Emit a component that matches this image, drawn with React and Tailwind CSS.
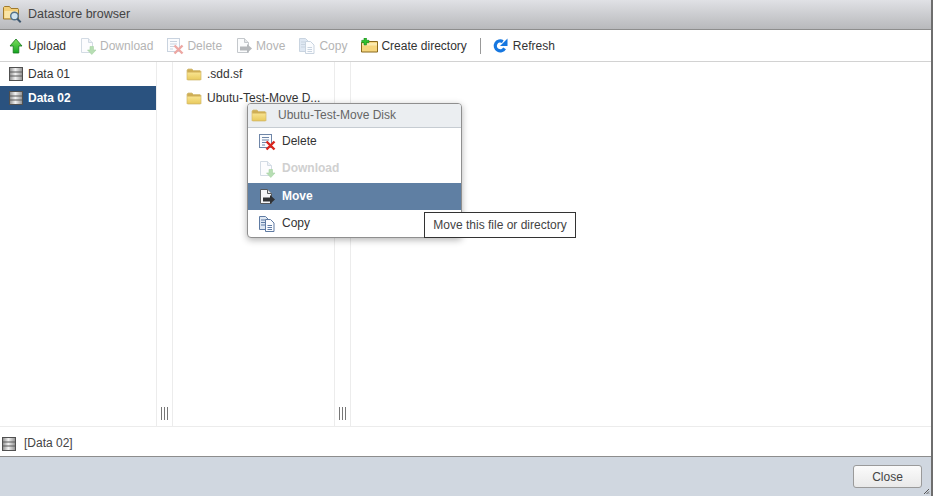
import { useId } from 'react'

function FolderIcon({ className = '' }) {
  const id = useId()
  return (
    <svg width="16" height="13" viewBox="0 0 16 13" className={className}>
      <defs>
        <linearGradient id={id} x1="0" x2="0" y1="0" y2="1">
          <stop offset="0" stopColor="#f8e38f" />
          <stop offset="1" stopColor="#e9cb5f" />
        </linearGradient>
      </defs>
      <path d="M1 11.500V2l1-1h4l1.500 1.500H14l1 1v8l-.5.500h-13z" fill="#cfae55" stroke="#d6c07e" strokeWidth="0.800" />
      <path d="M1.300 4.500h13.400V11.500H1.300z" fill={`url(#${id})`} />
    </svg>
  )
}

function DiskIcon({ size = 16 }) {
  const id = useId()
  return (
    <svg width={size} height={size} viewBox="0 0 14 14">
      <defs>
        <linearGradient id={id} x1="0" x2="1" y1="0" y2="0">
          <stop offset="0" stopColor="#8c8c8c" />
          <stop offset="0.45" stopColor="#f2f2f2" />
          <stop offset="1" stopColor="#8f8f8f" />
        </linearGradient>
      </defs>
      <rect x="0.500" y="0.500" width="13" height="13" fill={`url(#${id})`} stroke="#505050" />
      <path d="M1 5h12M1 9h12" stroke="#5a5a5a" strokeWidth="1" />
    </svg>
  )
}

function PageBase({ faded, children }) {
  const s = faded ? '#c5d0dc' : '#6d83a3'
  return (
    <svg width="18" height="18" viewBox="0 0 18 18" opacity={faded ? 0.75 : 1}>
      <path d="M2.500 1.500h7l4 4v10h-11z" fill="#fbfcfe" stroke={s} />
      <path d="M9.500 1.500v4h4" fill="#e6ecf3" stroke={s} />
      {children}
    </svg>
  )
}

function DownloadIcon({ faded }) {
  return (
    <PageBase faded={faded}>
      <path d="M11 9.500h3.500v3.500H17l-4.200 4.500L8.500 13H11z" fill="#9fd39a" stroke="#8cc488" strokeWidth="0.600" />
    </PageBase>
  )
}

function DeleteIcon({ faded }) {
  const line = faded ? '#c9d3df' : '#6f86a8'
  const x = faded ? '#eda7a3' : '#d9251c'
  return (
    <svg width="18" height="18" viewBox="0 0 18 18">
      <rect x="1.500" y="1.500" width="12" height="13" fill="#fbfcfe" stroke={line} />
      <path d="M4 4.500h7M4 7h7M4 9.500h4M4 12h3" stroke={line} />
      <path d="M8.500 8.500l8 8M16.500 8.500l-8 8" stroke={x} strokeWidth="2.400" />
    </svg>
  )
}

function MoveIcon({ faded, active }) {
  const s = faded ? '#c4c8cc' : '#55585c'
  const arrow = faded ? '#b5b8bb' : '#2f3134'
  return (
    <svg width="18" height="18" viewBox="0 0 18 18">
      <path d="M2.500 1.500h7l4 4v10h-11z" fill={active ? '#f4f5f7' : '#fbfcfd'} stroke={s} />
      <path d="M9.500 1.500v4h4" fill="#e4e6e8" stroke={s} />
      <path d="M5 9.500h7V7l5 4.500-5 4.500v-2.500H5z" fill={arrow} />
    </svg>
  )
}

function CopyIcon({ faded }) {
  const s = faded ? '#c9d4e0' : '#5f7ba3'
  return (
    <svg width="18" height="18" viewBox="0 0 18 18">
      <path d="M1.500 1.500h6l2.500 2.500v10.500h-8.500z" fill="#dfe8f3" stroke={s} />
      <path d="M3 5h4M3 7.500h4M3 10h4" stroke={s} />
      <path d="M7.500 4.500h5l3.500 3.500v8.500H7.500z" fill="#fbfcfe" stroke={s} />
      <path d="M9.500 10.500h4.500M9.500 12.500h4.500M9.500 14.500h4.500" stroke={s} />
    </svg>
  )
}

function UploadIcon() {
  const id = useId()
  return (
    <svg width="14" height="16" viewBox="0 0 14 16">
      <defs>
        <linearGradient id={id} x1="0" x2="0" y1="0" y2="1">
          <stop offset="0" stopColor="#7ee05f" />
          <stop offset="1" stopColor="#12a51f" />
        </linearGradient>
      </defs>
      <path d="M7 1l6 7H9.800v7H4.200V8H1z" fill={`url(#${id})`} stroke="#14761c" strokeWidth="0.800" strokeLinejoin="round" />
    </svg>
  )
}

function NewFolderIcon() {
  return (
    <svg width="17" height="15" viewBox="0 0 17 15">
      <path d="M.500 14V4.500h6l1-1h9V14z" fill="#f6d67e" stroke="#8a6a1e" />
      <path d="M1 5h15v2.500H1z" fill="#fbeab0" />
      <path d="M3 0h2.500v2.300H8v2.400H5.500V7H3V4.700H.700V2.300H3z" fill="#2fc22f" stroke="#157a15" strokeWidth="0.500" />
    </svg>
  )
}

function RefreshIcon() {
  return (
    <svg width="15" height="15" viewBox="0 0 15 15">
      <path d="M11.600 10.400A5 5 0 1 1 9.800 3.600" fill="none" stroke="#1677e0" strokeWidth="3.200" />
      <path d="M14.500 0.500V8H7z" fill="#1677e0" />
    </svg>
  )
}

function DialogIcon() {
  return (
    <svg width="19" height="19" viewBox="0 0 19 19">
      <path d="M.500 14V2.500l1-1h5l1.500 2h7l.5 1V14z" fill="#f3cf78" stroke="#a07a2c" />
      <path d="M1.500 6h13v7h-13z" fill="#fae5a6" />
      <circle cx="11.500" cy="11" r="3.800" fill="#cfe3ef" stroke="#51718a" strokeWidth="1.400" />
      <path d="M14.200 13.700l3.500 3.500" stroke="#3f5870" strokeWidth="2" />
    </svg>
  )
}

function ToolButton({ icon, label, faded, className = '' }) {
  return (
    <div className={`flex items-center gap-[3px] ${faded ? 'text-[#b4b4b4]' : 'text-[#333]'} ${className}`}>
      <span className="flex w-[18px] h-[18px] items-center justify-center">{icon}</span>
      <span>{label}</span>
    </div>
  )
}

function Splitter() {
  return (
    <div className="w-[17px] shrink-0 border-x border-[#ececec] flex items-end justify-center pb-[6px]">
      <div className="flex gap-[2px] h-[13px]">
        <span className="w-px bg-[#777]" />
        <span className="w-px bg-[#777]" />
        <span className="w-px bg-[#777]" />
      </div>
    </div>
  )
}

function MenuItem({ icon, label, faded, active }) {
  let color = 'text-[#333]'
  if (faded) color = 'text-[#d0d0d0] font-bold'
  if (active) color = 'bg-[#5f7fa3] text-white font-bold'
  return (
    <div className={`h-[27px] flex items-center pl-[10px] ${color}`}>
      <span className="w-[18px] h-[18px] flex items-center justify-center mr-[6px]">{icon}</span>
      <span className="-mt-[2px]">{label}</span>
    </div>
  )
}

export default function App() {
  return (
    <div className="relative w-[933px] h-[496px] overflow-hidden flex flex-col bg-white border-r-2 border-[#6e6e6e] text-[12px] text-[#333] font-['Liberation_Sans',Arial,sans-serif]">
      {/* Title bar */}
      <div className="h-[30px] shrink-0 flex items-center pl-[3px] gap-[7px] bg-gradient-to-b from-[#e0e1e5] to-[#b8b9bc] border-b border-[#8d8d8d]">
        <DialogIcon />
        <span className="text-[12.500px] text-[#444] -ml-[1px]">Datastore browser</span>
      </div>

      {/* Toolbar */}
      <div className="h-[32px] shrink-0 flex items-center pl-[7px] border-b border-[#d2d2d2] gap-[13px]">
        <ToolButton icon={<UploadIcon />} label="Upload" />
        <ToolButton icon={<DownloadIcon faded />} label="Download" faded />
        <ToolButton icon={<DeleteIcon faded />} label="Delete" faded />
        <ToolButton icon={<MoveIcon faded />} label="Move" faded />
        <ToolButton icon={<CopyIcon faded />} label="Copy" faded />
        <ToolButton icon={<NewFolderIcon />} label="Create directory" />
        <div className="w-px h-[16px] bg-[#999]" />
        <ToolButton icon={<RefreshIcon />} label="Refresh" className="-ml-[2px]" />
      </div>

      {/* Browser columns */}
      <div className="flex-1 flex min-h-0">
        <div className="w-[156px] shrink-0">
          <div className="h-[24px] flex items-center pl-[9px] gap-[5px]">
            <DiskIcon size={14} />
            <span>Data 01</span>
          </div>
          <div className="h-[24px] flex items-center pl-[9px] gap-[5px] bg-[#2a527f] text-white font-bold">
            <DiskIcon size={14} />
            <span>Data 02</span>
          </div>
        </div>
        <Splitter />
        <div className="w-[161px] shrink-0 pl-[13px]">
          <div className="h-[24px] flex items-center gap-[5px]">
            <FolderIcon />
            <span>.sdd.sf</span>
          </div>
          <div className="h-[24px] flex items-center gap-[5px]">
            <FolderIcon />
            <span>Ubutu-Test-Move D...</span>
          </div>
        </div>
        <Splitter />
        <div className="flex-1" />
      </div>

      {/* Status line */}
      <div className="h-[31px] shrink-0 flex items-center pl-[2px] pt-[4px] gap-[8px] border-t border-[#ececec] border-b border-b-[#8d8d8d]">
        <DiskIcon size={14} />
        <span className="-mt-[1px] text-[#444]">[Data 02]</span>
      </div>

      {/* Footer */}
      <div className="h-[39px] shrink-0 flex items-center justify-end pr-[9px] bg-[#d0d7e0]">
        <button className="w-[69px] h-[23px] rounded-[3px] border border-[#9a9a9a] bg-gradient-to-b from-[#fbfbfb] to-[#e9e9e9] text-[#444]">
          Close
        </button>
      </div>

      {/* Resize grip */}
      <svg width="7" height="7" viewBox="0 0 7 7" className="absolute right-[1px] bottom-[1px]">
        <path d="M1 6l5-5M3.500 6L6 3.500M5.500 6L6 5.500" stroke="#555" />
      </svg>

      {/* Context menu */}
      <div className="absolute left-[247px] top-[103px] w-[215px] rounded-[4px] border border-[#8f8f8f] bg-white shadow-[0_2px_7px_rgba(0,0,0,0.3)] overflow-hidden">
        <div className="h-[24px] flex items-center pl-[3px] bg-[#ebeef1] border-b border-[#c6ccd2] text-[#666]">
          <FolderIcon />
          <span className="ml-[11px] -mt-[2px]">Ubutu-Test-Move Disk</span>
        </div>
        <MenuItem icon={<DeleteIcon />} label="Delete" />
        <MenuItem icon={<DownloadIcon faded />} label="Download" faded />
        <div className="h-px" />
        <MenuItem icon={<MoveIcon active />} label="Move" active />
        <MenuItem icon={<CopyIcon />} label="Copy" />
      </div>

      {/* Tooltip */}
      <div className="absolute left-[424px] top-[212px] h-[26px] w-[152px] flex items-center justify-center border border-[#333] bg-white text-[#444] whitespace-nowrap">
        Move this file or directory
      </div>
    </div>
  )
}
